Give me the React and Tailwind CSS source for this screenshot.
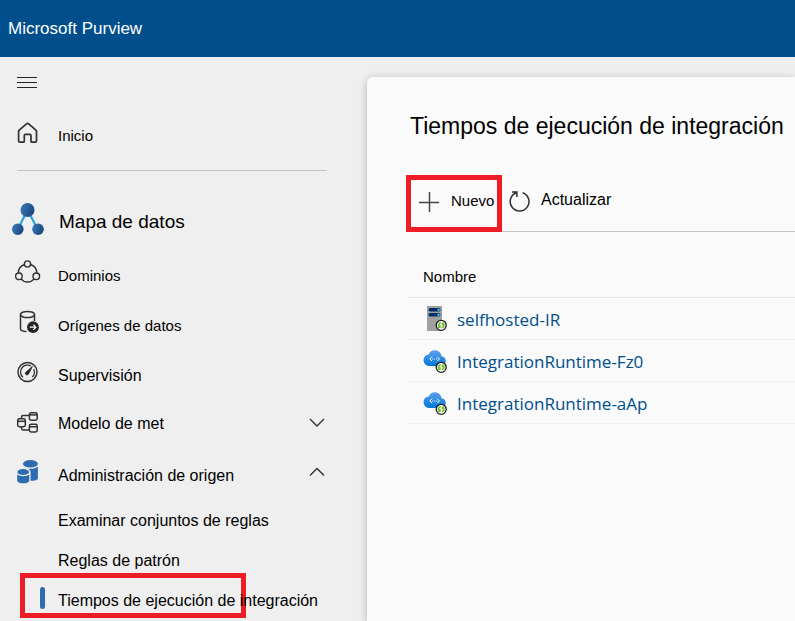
import { useState } from "react";

const HomeIcon = () => (
  <svg viewBox="0 0 24 24" className="size-6" fill="none" stroke="#323130" strokeWidth="1.7" strokeLinejoin="round">
    <path d="M2.6 10.6c0-.8.3-1.3.9-1.8l7-6c.7-.6 1.500-.6 2.200 0l6.900 6c.6.500.9 1 .9 1.800v9.200c0 .9-.5 1.400-1.400 1.400h-3.200c-.6 0-.9-.4-.9-1v-5.700c0-.8-.5-1.200-1.200-1.200h-4.300c-.7 0-1.200.4-1.200 1.200v5.700c0 .6-.3 1-.9 1H4c-.9 0-1.400-.5-1.400-1.400z" />
  </svg>
);

const MapIcon = () => (
  <svg viewBox="0 0 32 32" className="size-8">
    <defs>
      <linearGradient id="node" x1="0" y1="0" x2="1" y2="0.4">
        <stop offset="0" stopColor="#3a7cc0" />
        <stop offset="1" stopColor="#1d4a7e" />
      </linearGradient>
    </defs>
    <path d="M6 26 15.500 7 25.500 26" fill="none" stroke="#2ba3dc" strokeWidth="2.200" />
    <circle cx="15.500" cy="7" r="7" fill="url(#node)" />
    <circle cx="5.800" cy="26.200" r="5.800" fill="url(#node)" />
    <circle cx="26" cy="26.200" r="5.800" fill="url(#node)" />
  </svg>
);

const DomainsIcon = () => (
  <svg viewBox="0 0 26 24" className="h-6 w-[26px] shrink-0" fill="none" stroke="#323130" strokeWidth="1.400">
    <circle cx="12.500" cy="4" r="3.100" />
    <circle cx="3.900" cy="16.300" r="3.300" />
    <circle cx="21.300" cy="16.300" r="3.300" />
    <path d="M9.500 4.500C5.600 5.800 3.300 9.100 3.300 13M15.600 4.500c3.900 1.300 6.200 4.600 6.200 8.500M6 18.900c3.300 4.200 9.800 4.200 13.100 0" />
  </svg>
);

const SourcesIcon = () => (
  <svg viewBox="0 0 24 24" className="size-6" fill="none" stroke="#323130" strokeWidth="1.500">
    <ellipse cx="11.500" cy="4.500" rx="7" ry="3.100" />
    <path d="M4.500 4.500v14.200c0 1.500 2.600 2.700 6 2.900M18.500 4.500v6.500" />
    <circle cx="17" cy="17.200" r="5.900" fill="#252423" stroke="none" />
    <path d="M13.800 17.200h6M17.300 14.600l2.600 2.600-2.600 2.600" stroke="#fff" strokeWidth="1.200" />
  </svg>
);

const MonitorIcon = () => (
  <svg viewBox="0 0 24 24" className="size-6" fill="none" stroke="#323130" strokeWidth="1.500">
    <circle cx="11.500" cy="12" r="9.500" />
    <path d="M7 17.200a6.900 6.900 0 0 1 7.800-11.300M17.700 9.300a6.900 6.900 0 0 1-1.300 7.700" strokeWidth="1.300" />
    <path d="M16.300 6.600 10 12.200a1.500 1.500 0 1 0 2.300 1.800z" fill="#252423" stroke="#252423" strokeWidth="1" />
  </svg>
);

const ModelIcon = () => (
  <svg viewBox="0 0 24 24" className="size-6" fill="none" stroke="#323130" strokeWidth="1.500">
    <rect x="1.700" y="8.700" width="7.600" height="8" rx="1.700" />
    <path d="M1.700 11.300h7.600" />
    <rect x="13.400" y="2.700" width="7.800" height="7.500" rx="1.700" />
    <path d="M13.400 4.900h7.800" />
    <rect x="13.400" y="14.300" width="7.800" height="7.700" rx="1.700" />
    <path d="M13.400 16.700h7.800M5.500 8.700V7c0-1 .6-1.600 1.600-1.600h6.300M5.500 16.700v1.600c0 1 .6 1.600 1.600 1.600h6.300" />
  </svg>
);

const ManagementIcon = () => (
  <svg viewBox="0 0 24 24" className="size-6" fill="#2f6bb0">
    <ellipse cx="14.400" cy="3.800" rx="7.500" ry="3.700" />
    <path d="M14 8.800c3.400 0 6.300-.8 7.900-2.300v11.900c0 1.400-3.300 2.300-7.300 2.400v-8.300c0-1.500-.9-2.700-2.400-3.700z" />
    <ellipse cx="7.200" cy="12" rx="5.900" ry="3" />
    <path d="M1.200 14.600c2.800 2.300 9.400 2.300 12.100 0v5.800c0 1.600-2.700 2.900-6 2.900s-6.100-1.300-6.100-2.900z" />
  </svg>
);

const Chevron = ({ up }) => (
  <svg viewBox="0 0 20 20" className="size-5" fill="none" stroke="#323130" strokeWidth="1.400">
    <path d={up ? "M3 13.500 10 6.500l7 7" : "M3 7l7 7 7-7"} />
  </svg>
);

const PlusIcon = () => (
  <svg viewBox="0 0 20 20" className="size-5 shrink-0" stroke="#484644" strokeWidth="1.500">
    <path d="M0 10.500h20M10.500 0v20" />
  </svg>
);

const RefreshIcon = () => (
  <svg viewBox="0 0 21 22" className="h-[22px] w-[21px] shrink-0" fill="none" stroke="#323130" strokeWidth="1.500">
    <path d="M13.600 2.700a9.400 9.400 0 1 1-6.300.1M3 2h4.900v5" />
  </svg>
);

const StatusBadge = () => (
  <>
    <circle cx="18.200" cy="19.300" r="5" fill="#fff" stroke="#1b1a19" strokeWidth="1.300" />
    <path d="M17.700 16.100a3.200 3.200 0 0 0-2.500 5l-.7.900h3.200v-3l-.9.800c-.5-.9-.1-1.800.9-2zM18.700 22.400a3.200 3.200 0 0 0 2.500-5l.7-.9h-3.200v3l.9-.8c.5.900.1 1.800-.9 2z" fill="#76bc2d" />
  </>
);

const ServerIcon = () => (
  <svg viewBox="0 0 24 25" className="h-[25px] w-6">
    <rect x="4" y="0" width="15" height="25" rx="0.600" fill="#a0a0a0" />
    <rect x="5.500" y="2" width="12" height="3.600" rx="1.800" fill="#003067" />
    <rect x="5.500" y="7" width="12" height="3.600" rx="1.800" fill="#003067" />
    <circle cx="15.600" cy="3.800" r="1.100" fill="#50e6ff" />
    <circle cx="15.600" cy="8.800" r="1.100" fill="#50e6ff" />
    <StatusBadge />
  </svg>
);

const CloudIcon = () => (
  <svg viewBox="0 0 24 25" className="h-[25px] w-6">
    <defs>
      <linearGradient id="cloud" x1="0" y1="0" x2="0" y2="1">
        <stop offset="0" stopColor="#5ea0ef" />
        <stop offset="1" stopColor="#0078d4" />
      </linearGradient>
    </defs>
    <path d="M22.700 12.900a4.800 4.800 0 0 0-4.200-4.600A6.300 6.300 0 0 0 12 2.300a6.500 6.500 0 0 0-6.200 4.200A6 6 0 0 0 .5 12.200a6.100 6.100 0 0 0 6.300 5.800h11.100a4.900 4.900 0 0 0 4.800-5.100z" fill="url(#cloud)" />
    <path d="M9.100 8.700 6.900 10.900l2.200 2.200M14.300 8.700l2.200 2.200-2.200 2.200" fill="none" stroke="#fff" strokeWidth="1" />
    <path d="M9.200 10.400h1v1h-1zM11.200 10.400h1v1h-1zM13.200 10.400h1v1h-1z" fill="#fff" />
    <StatusBadge />
  </svg>
);

const runtimes = [
  { name: "selfhosted-IR", icon: <ServerIcon /> },
  { name: "IntegrationRuntime-Fz0", icon: <CloudIcon /> },
  { name: "IntegrationRuntime-aAp", icon: <CloudIcon /> },
];

const links = [
  { name: "Dominios", icon: <DomainsIcon /> },
  { name: "Orígenes de datos", icon: <SourcesIcon /> },
];

const NavLink = ({ icon, children, size = "text-[15px]" }) => (
  <a href="#" className={`flex h-[50px] items-center gap-[18px] pl-4 ${size}`}>
    <span className="flex w-6 shrink-0 justify-center">{icon}</span>
    <span className="pt-2">{children}</span>
  </a>
);

const Sidebar = () => {
  const [modelOpen, setModelOpen] = useState(false);
  const [adminOpen, setAdminOpen] = useState(true);

  return (
    <nav className="w-[367px] shrink-0 pt-1.5">
      <button aria-label="Menú" className="flex h-[38px] items-center pl-[17px]">
        <svg viewBox="0 0 20 12" className="h-3 w-5" stroke="#252423" strokeWidth="1">
          <path d="M0 1.500h20M0 6.500h20M0 11.500h20" />
        </svg>
      </button>
      <a href="#" className="flex h-16 items-center gap-[18px] pl-4 text-[15px]">
        <HomeIcon />
        <span className="pt-1.5">Inicio</span>
      </a>
      <hr className="mt-[5px] mr-10 ml-[17px] border-[#c4c4c4]" />
      <h2 className="mt-6 mb-1 flex h-12 items-center gap-[15px] pl-3 text-[19px]">
        <MapIcon />
        <span className="pt-1.5">Mapa de datos</span>
      </h2>
      {links.map((link) => (
        <NavLink key={link.name} icon={link.icon}>
          {link.name}
        </NavLink>
      ))}
      <NavLink icon={<MonitorIcon />} size="text-base">
        Supervisión
      </NavLink>
      <button
        className="flex h-[50px] w-full items-center gap-[18px] pr-10 pl-4 text-base"
        aria-expanded={modelOpen}
        onClick={() => setModelOpen(!modelOpen)}
      >
        <ModelIcon />
        <span className="flex-1 pt-1 text-left">Modelo de met</span>
        <Chevron up={modelOpen} />
      </button>
      <button
        className="flex h-[50px] w-full items-center gap-[18px] pr-10 pl-4 text-base"
        aria-expanded={adminOpen}
        onClick={() => setAdminOpen(!adminOpen)}
      >
        <ManagementIcon />
        <span className="flex-1 pt-2 text-left">Administración de origen</span>
        <Chevron up={adminOpen} />
      </button>
      {adminOpen && (
        <div className="pt-1 text-base">
          <a href="#" className="flex h-10 items-center pl-[58px]">
            Examinar conjuntos de reglas
          </a>
          <a href="#" className="flex h-10 items-center pl-[58px]">
            Reglas de patrón
          </a>
          <a href="#" aria-current="page" className="relative flex h-10 items-center gap-[13px] pl-10">
            <span className="absolute -top-2 left-5 h-[45px] w-[226px] border-[5px] border-[#ee1c25]" />
            <span className="mb-1.5 h-[22px] w-[5px] rounded-full bg-[#2f6bb0]" />
            <span className="relative">Tiempos de ejecución de integración</span>
          </a>
        </div>
      )}
    </nav>
  );
};

const App = () => {
  return (
    <div className="flex min-h-screen flex-col overflow-hidden bg-[#efefef] font-['Liberation_Sans',Arial,sans-serif] text-black">
      <header className="flex h-[57px] items-center bg-[#004e8c] px-2 text-[17px] text-white">
        Microsoft Purview
      </header>
      <div className="flex flex-1">
        <Sidebar />
        <main className="mt-5 min-w-0 flex-1 rounded-tl-md bg-[#fafafa] pt-[33px] pl-[39px] shadow-[0_2px_8px_rgba(0,0,0,0.25)]">
          <h1 className="pl-1 text-[23px] leading-8 whitespace-nowrap">Tiempos de ejecución de integración</h1>
          <div className="mt-[33px] flex h-[57px] border-b border-[#c4c4c4]">
            <div className="-mb-px flex w-24 border-[5px] border-[#ee1c25]">
              <button className="flex items-center gap-3 pb-1 pl-2 text-[15px]">
                <PlusIcon />
                Nuevo
              </button>
            </div>
            <button className="flex items-center gap-[11px] pb-1 pl-[7px] text-base">
              <RefreshIcon />
              <span className="pb-0.5">Actualizar</span>
            </button>
          </div>
          <table className="mt-[26px] ml-0.5 w-full border-collapse">
            <thead>
              <tr className="h-[39px] border-b border-[#e6e6e6]">
                <th className="pl-[15px] text-left text-[15px] font-normal">Nombre</th>
              </tr>
            </thead>
            <tbody>
              {runtimes.map((runtime) => (
                <tr key={runtime.name} className="h-[42px] border-b border-[#f1f1f1]">
                  <td className="pl-[15px]">
                    <a
                      href="#"
                      className="flex items-center gap-2.5 font-['Open_Sans','Noto_Sans',sans-serif] text-[17px] leading-6 text-[#004e8c]"
                    >
                      {runtime.icon}
                      <span className="pt-1">{runtime.name}</span>
                    </a>
                  </td>
                </tr>
              ))}
            </tbody>
          </table>
        </main>
      </div>
    </div>
  );
};

export default App;
